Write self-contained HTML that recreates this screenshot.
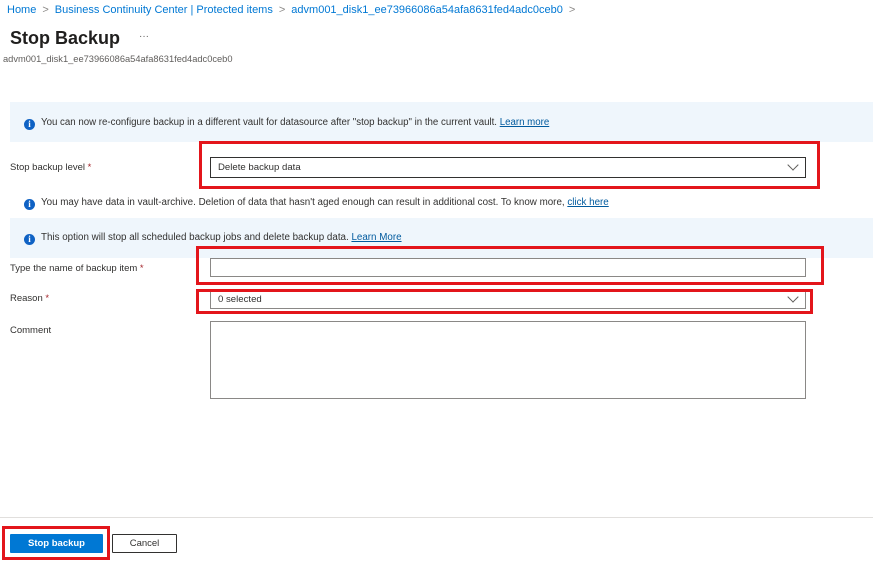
<!DOCTYPE html>
<html><head><style>
body{margin:0;width:873px;height:564px;background:#fff;font-family:"Liberation Sans",sans-serif;position:relative;overflow:hidden;color:#323130}
.a{position:absolute;white-space:nowrap}
.bc{font-size:11px;color:#0078d4;top:4px;left:7px}
.bc span{color:#8a8886;margin:0 6px}
.lbl{font-size:9.5px;left:10px}
.req{color:#a4262c}
.box{position:absolute;border:1px solid #8a8886;background:#fff;box-sizing:border-box}
.red{position:absolute;border:3px solid #e3151b;box-sizing:border-box}
.ic{display:inline-block;width:11px;height:11px;border-radius:50%;background:#0f62c4;color:#fff;font-size:9px;font-weight:bold;text-align:center;line-height:11px;vertical-align:-2px;margin-right:6px;font-family:"Liberation Serif",serif}
.t{font-size:9.6px;color:#323130}
a{color:#005a9e;text-decoration:underline}
.chev{position:absolute;right:8px;top:3px;width:7px;height:7px;border-right:1px solid #605e5c;border-bottom:1px solid #605e5c;transform:rotate(45deg)}
</style></head><body>
<div class="a bc">Home<span>&gt;</span>Business Continuity Center | Protected items<span>&gt;</span>advm001_disk1_ee73966086a54afa8631fed4adc0ceb0<span>&gt;</span></div>
<div class="a" style="top:28px;left:10px;font-size:18px;font-weight:bold;color:#201f1e">Stop Backup</div>
<div class="a" style="top:31px;left:139px;font-size:10px;color:#605e5c">···</div>
<div class="a" style="top:54px;left:3px;font-size:9.3px;color:#605e5c">advm001_disk1_ee73966086a54afa8631fed4adc0ceb0</div>

<div class="a" style="top:102px;left:10px;width:863px;height:40px;background:#eff6fc"></div>
<div class="a t" style="top:117px;left:24px;font-size:9.7px"><span class="ic">i</span>You can now re-configure backup in a different vault for datasource after "stop backup" in the current vault. <a>Learn more</a></div>

<div class="a lbl" style="top:162px">Stop backup level <span class="req">*</span></div>
<div class="box" style="left:210px;top:157px;width:596px;height:21px;border-color:#323130"><span class="a t" style="left:7px;top:4px">Delete backup data</span><div class="chev"></div></div>
<div class="red" style="left:199px;top:141px;width:621px;height:48px"></div>

<div class="a t" style="top:197px;left:24px;font-size:9.8px"><span class="ic">i</span>You may have data in vault-archive. Deletion of data that hasn't aged enough can result in additional cost. To know more, <a> click here</a></div>

<div class="a" style="top:218px;left:10px;width:863px;height:40px;background:#eff6fc"></div>
<div class="a t" style="top:232px;left:24px;font-size:9.8px"><span class="ic">i</span>This option will stop all scheduled backup jobs and delete backup data. <a>Learn More</a></div>

<div class="a lbl" style="top:263px">Type the name of backup item <span class="req">*</span></div>
<div class="box" style="left:210px;top:258px;width:596px;height:19px"></div>
<div class="red" style="left:196px;top:246px;width:628px;height:39px"></div>

<div class="a lbl" style="top:293px">Reason <span class="req">*</span></div>
<div class="box" style="left:210px;top:290px;width:596px;height:19px"><span class="a t" style="left:7px;top:3px">0 selected</span><div class="chev" style="top:2px"></div></div>
<div class="red" style="left:196px;top:289px;width:617px;height:25px"></div>

<div class="a lbl" style="top:325px">Comment</div>
<div class="box" style="left:210px;top:321px;width:596px;height:78px"></div>

<div class="a" style="top:517px;left:0;width:873px;height:1px;background:#e1dfdd"></div>
<div class="a" style="top:534px;left:10px;width:93px;height:19px;background:#0078d4;color:#fff;font-size:9.5px;font-weight:bold;text-align:center;line-height:19px;border-radius:1px">Stop backup</div>
<div class="red" style="left:2px;top:526px;width:108px;height:34px"></div>
<div class="a" style="top:534px;left:112px;width:65px;height:19px;border:1px solid #323130;box-sizing:border-box;font-size:9.5px;text-align:center;line-height:17px;border-radius:1px">Cancel</div>
</body></html>
